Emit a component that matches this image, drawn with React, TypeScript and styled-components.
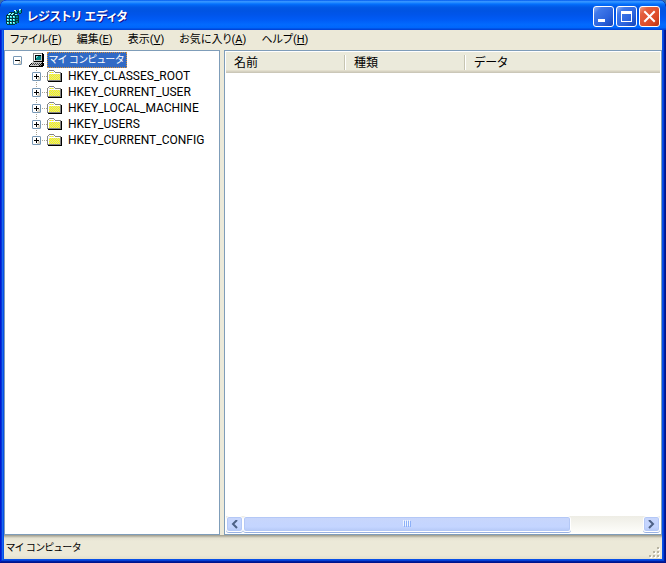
import React from 'react';
import styled, { createGlobalStyle, css } from 'styled-components';

const Global = createGlobalStyle`
  *, *::before, *::after { box-sizing: border-box; }
  html, body, #root { height: 100%; margin: 0; }
  body {
    background: #3a6ea5;
    color: #000;
    font: 12px/16px Roboto, "Noto Sans CJK JP", sans-serif;
    font-feature-settings: "palt";
    overflow: hidden;
  }
  button { font: inherit; font-feature-settings: inherit; color: inherit; padding: 0; border: 0; background: none; }
`;

const Window = styled.main`
  display: flex;
  flex-direction: column;
  height: 100%;
  padding: 0 4px 4px;
  border-radius: 7px 7px 0 0;
  overflow: hidden;
  background: #0850e8;
  box-shadow: inset -1px -1px #00138c, inset 1px 0 #0019cf, inset -2px -2px #001ea0, inset 2px 0 #0831d9, inset -3px -3px #0441d8, inset 3px 0 #166aee;
`;

const TitleBar = styled.header`
  display: flex;
  align-items: center;
  flex: none;
  gap: 5px;
  height: 30px;
  margin: 0 -4px;
  padding: 3px 6px 0 6px;
  border-radius: 7px 7px 0 0;
  background: linear-gradient(#0058ee 0, #3593ff 5%, #288eff 8%, #127dff 11%, #036ffc 14%, #0262ee 19%, #0057e5 26%, #0054e3 36%, #0055eb 50%, #005bf5 65%, #026afe 82%, #0066fc 92%, #0050e0 96%, #003dd7 100%);
`;

const Title = styled.h1`
  flex: 1;
  margin: 0;
  color: #fff;
  font-size: 12px;
  font-weight: 700;
  line-height: 20px;
  text-shadow: 1px 1px #0f1089;
`;

const Controls = styled.div`
  display: flex;
  gap: 2px;
`;

const ControlButton = styled.button<{ $close?: boolean }>`
  width: 21px;
  height: 21px;
  border: 1px solid #fff;
  border-radius: 3px;
  background: ${p => p.$close
    ? 'linear-gradient(135deg, #f0a088 0, #e4603f 22%, #dc4a26 70%, #b83210 100%)'
    : 'linear-gradient(135deg, #8fb0f5 0, #4079ea 22%, #2a62dc 65%, #1744b8 100%)'};
  svg { display: block; width: 19px; height: 19px; }
`;

const MenuBar = styled.nav`
  display: flex;
  flex: none;
  gap: 15px;
  height: 20px;
  padding: 0 6px;
  background: #ece9d8;
`;

const MenuButton = styled.button`
  font-size: 11px;
  line-height: 18px;
  white-space: nowrap;
`;

const Panes = styled.div`
  display: grid;
  grid-template-columns: 216px minmax(0, 1fr);
  gap: 4px;
  flex: 1;
  min-height: 0;
  background: #ece9d8;
`;

const pane = css`
  border: 1px solid #7f9db9;
  background: #fff;
  min-width: 0;
`;

const TreePane = styled.section`
  ${pane}
  padding: 1px 0 0 8px;
`;

const TreeList = styled.ul<{ $nested?: boolean }>`
  margin: 0;
  padding: 0 0 0 ${p => (p.$nested ? 19 : 0)}px;
  list-style: none;
`;

const TreeRow = styled.div<{ $branch?: 'middle' | 'last' }>`
  display: flex;
  align-items: center;
  height: 16px;
  ${p => p.$branch && css`
    background: repeating-linear-gradient(#aca899 0 1px, #fff 1px 2px) 4px 0 / 1px ${p.$branch === 'last' ? '8px' : '16px'} no-repeat;
  `}
`;

const Toggle = styled.button`
  width: 9px;
  height: 9px;
  svg { display: block; }
`;

const Connector = styled.span<{ $visible?: boolean }>`
  width: ${p => (p.$visible ? 6 : 7)}px;
  height: 1px;
  background: ${p => (p.$visible ? 'repeating-linear-gradient(90deg, #fff 0 1px, #aca899 1px 2px)' : 'none')};
`;

const NodeIcon = styled.span`
  width: 16px;
  height: 16px;
  margin-right: 2px;
  svg { display: block; }
`;

const NodeLabel = styled.span<{ $selected?: boolean }>`
  height: 16px;
  padding: 0 3px;
  line-height: 16px;
  white-space: nowrap;
  ${p => p.$selected && css`
    padding: 0 2px 0 1px;
    font-size: 10px;
    line-height: 14px;
    border: 1px dotted #d6913a;
    background: #316ac5;
    color: #fff;
  `}
`;

const ListPane = styled.section`
  ${pane}
  display: flex;
  flex-direction: column;
  padding: 1px;
`;

const ValueTable = styled.table`
  width: 100%;
  table-layout: fixed;
  border-collapse: separate;
  border-spacing: 0;
`;

const ColumnHead = styled.th<{ $fixed?: boolean }>`
  width: ${p => (p.$fixed ? '120px' : 'auto')};
  height: 21px;
  padding: 0 8px;
  font-weight: 400;
  line-height: 18px;
  text-align: left;
  background:
    ${p => (p.$fixed ? 'linear-gradient(#c7c5b2, #c7c5b2) calc(100% - 1px) 3px / 1px 15px no-repeat, linear-gradient(#fff, #fff) 100% 3px / 1px 15px no-repeat,' : '')}
    linear-gradient(#ebeadb 0, #ebeadb 18px, #e2decd 18px, #e2decd 19px, #d6d2c2 19px, #d6d2c2 20px, #cbc7b8 20px);
`;

const Spacer = styled.div`
  flex: 1;
`;

const ScrollBar = styled.div`
  display: flex;
  height: 17px;
  background: linear-gradient(#eeede5, #fefefb);
`;

const scrollPart = css`
  border: 1px solid #fff;
  border-radius: 3px;
  background: linear-gradient(#c8d6fb 0, #c4d5ff 70%, #b4c8f6 100%);
  box-shadow: inset 0 0 0 1px #b4c8f6, 0 1px #98b1e4;
`;

const ScrollButton = styled.button`
  ${scrollPart}
  flex: none;
  width: 17px;
  height: 16px;
  svg { display: block; margin: auto; }
`;

const ScrollTrack = styled.div`
  flex: 1;
`;

const ScrollThumb = styled.div`
  ${scrollPart}
  display: flex;
  align-items: center;
  justify-content: center;
  width: 82%;
  height: 16px;
`;

const StatusBar = styled.footer`
  display: flex;
  justify-content: space-between;
  align-items: flex-end;
  flex: none;
  height: 24px;
  padding-left: 2px;
  background: linear-gradient(#9d9a8c 0, #c9c6b5 2px, #e3e0d0 3px, #ece9d8 6px, #ece9d8 20px, #e3dfcc 100%);
`;

const StatusText = styled.span`
  font-size: 10px;
  line-height: 22px;
`;

const FolderIcon = () => (
  <svg width="16" height="16" shapeRendering="crispEdges" aria-hidden="true">
    <defs>
      <pattern id="folder-dither" width="2" height="2" patternUnits="userSpaceOnUse">
        <path d="M0 0h2v2H0z" fill="#ffff00" />
        <path d="M0 0h1v1H0zM1 1h1v1H1z" fill="#d8d8a8" />
      </pattern>
    </defs>
    <path d="M2 2h5v1h1v1h6v9H0V4h1V3h1z" fill="#848484" />
    <path d="M2 3h5v1H2zM1 4h7v1H1zM1 5h12v1H1zM1 6h1v6H1z" fill="#fff" />
    <path d="M2 4h5v1H2zM2 6h11v6H2z" fill="url(#folder-dither)" />
    <path d="M14 5h1v9H1v-1h13z" fill="#000" />
  </svg>
);

const ComputerIcon = () => (
  <svg width="16" height="16" shapeRendering="crispEdges" aria-hidden="true">
    <path d="M5 1h9v1h1v8h-1v1H4V2h1z" fill="#000" />
    <path d="M4 1h9v1H5v8H4z" fill="#848484" />
    <path d="M5 2h8v7H5z" fill="#c6c6c6" />
    <path d="M5 2h8v1H6v6H5z" fill="#fff" />
    <path d="M6 3h6v5H6z" fill="#000" />
    <path d="M7 4h5v4H7z" fill="#008484" />
    <path d="M7 4h2v1H8v1H7z" fill="#84e0e0" />
    <path d="M3 10h11v1h1v3h-1v1H0v-2h1v-1h1v-1h1z" fill="#000" />
    <path d="M3 10h10v1h-1v1h-1v1h-1v1H1v-1h1v-1h1z" fill="#c6c6c6" />
    <path d="M4 11h1v1H4zM6 11h1v1H6zM8 11h1v1H8zM10 11h1v1h-1zM3 12h1v1H3zM5 12h1v1H5zM7 12h1v1H7zM9 12h1v1H9z" fill="#424242" />
    <path d="M12 12h1v1h-1zM11 13h1v1h-1z" fill="#848484" />
  </svg>
);

const RegistryIcon = () => (
  <svg width="16" height="16" shapeRendering="crispEdges" aria-hidden="true">
    <path d="M3 3h5v1h3v2h2v8h-2v1H9v1H1v-1H0V6h1V5h2z" fill="#003a42" />
    <path d="M3 4h2v1H3zM6 4h2v1H6zM2 5h2v1H2zM5 5h2v1H5zM9 5h2v1H9z" fill="#84ffff" />
    <path d="M1 7h2v2H1zM4 7h2v2H4zM7 7h2v2H7zM1 10h2v2H1zM4 10h2v2H4zM7 10h2v2H7zM1 13h2v2H1zM4 13h2v2H4zM7 13h2v2H7z" fill="#30e0e0" />
    <path d="M1 7h1v1H1zM4 7h1v1H4zM7 7h1v1H7zM1 10h1v1H1zM4 10h1v1H4zM7 10h1v1H7zM1 13h1v1H1zM4 13h1v1H4zM7 13h1v1H7z" fill="#e0ffff" />
    <path d="M10 7h2v2h-2zM10 10h2v1h-2zM10 12h2v2h-2z" fill="#008484" />
    <path d="M8 1h3v1h1v3H9V4H8zM13 0h3v4h-1v1h-2V4h-1V1h1z" fill="#003a42" />
    <path d="M8 1h2v1H8zM13 0h2v1h-2z" fill="#c0ffff" />
    <path d="M9 2h2v2H9zM13 1h2v3h-2z" fill="#00a5a5" />
    <path d="M9 2h1v1H9zM13 1h1v1h-1z" fill="#84ffff" />
  </svg>
);

const ToggleGlyph = ({ open }: { open?: boolean }) => (
  <svg width="9" height="9" shapeRendering="crispEdges" aria-hidden="true">
    <path d="M0 0h9v9H0z" fill="#b4c5d6" />
    <path d="M1 0h7v1h1v7h-1v1H1V8H0V1h1z" fill="#7898b5" />
    <path d="M1 1h7v7H1z" fill="#fff" />
    <path d="M6 5h2v3H5V7h1z" fill="#d8d2c4" />
    <path d={open ? 'M2 4h5v1H2z' : 'M2 4h2V2h1v2h2v1H5v2H4V5H2z'} fill="#000" />
  </svg>
);

const Chevron = ({ right }: { right?: boolean }) => (
  <svg width="9" height="9" viewBox="0 0 9 9" aria-hidden="true">
    <path d={right ? 'M2 0l4 4-4 4' : 'M7 0L3 4l4 4'} fill="none" stroke="#4d6185" strokeWidth="2" />
  </svg>
);

const Grip = () => (
  <svg width="8" height="8" shapeRendering="crispEdges" aria-hidden="true">
    <path d="M0 0h1v6H0zM2 0h1v6H2zM4 0h1v6H4zM6 0h1v6H6z" fill="#eef4fe" />
    <path d="M1 1h1v6H1zM3 1h1v6H3zM5 1h1v6H5zM7 1h1v6H7z" fill="#8cb0f8" />
  </svg>
);

const SizeGrip = () => (
  <svg width="13" height="13" shapeRendering="crispEdges" aria-hidden="true">
    <path d="M9 2h2v2H9zM5 6h2v2H5zM9 6h2v2H9zM1 10h2v2H1zM5 10h2v2H5zM9 10h2v2H9z" fill="#fff" />
    <path d="M8 1h2v2H8zM4 5h2v2H4zM8 5h2v2H8zM0 9h2v2H0zM4 9h2v2H4zM8 9h2v2H8z" fill="#b8b4a2" />
  </svg>
);

const menus = [['ファイル', 'F'], ['編集', 'E'], ['表示', 'V'], ['お気に入り', 'A'], ['ヘルプ', 'H']];
const hives = ['HKEY_CLASSES_ROOT', 'HKEY_CURRENT_USER', 'HKEY_LOCAL_MACHINE', 'HKEY_USERS', 'HKEY_CURRENT_CONFIG'];

export default function App() {
  return (
    <>
      <Global />
      <Window>
        <TitleBar>
          <RegistryIcon />
          <Title>レジストリ エディタ</Title>
          <Controls>
            <ControlButton aria-label="最小化"><svg aria-hidden="true"><path d="M4 12h7v3H4z" fill="#fff" /></svg></ControlButton>
            <ControlButton aria-label="最大化"><svg shapeRendering="crispEdges" aria-hidden="true"><path d="M4 4h11v11H4zM5 7v7h9V7z" fill="#fff" fillRule="evenodd" /></svg></ControlButton>
            <ControlButton $close aria-label="閉じる"><svg aria-hidden="true"><path d="M5 5l9 9M14 5l-9 9" stroke="#fff" strokeWidth="2" strokeLinecap="square" /></svg></ControlButton>
          </Controls>
        </TitleBar>
        <MenuBar>
          {menus.map(([name, key]) => <MenuButton key={key}>{name}(<u>{key}</u>)</MenuButton>)}
        </MenuBar>
        <Panes>
          <TreePane>
            <TreeList>
              <li>
                <TreeRow>
                  <Toggle aria-label="折りたたむ"><ToggleGlyph open /></Toggle>
                  <Connector />
                  <NodeIcon><ComputerIcon /></NodeIcon>
                  <NodeLabel $selected>マイ コンピュータ</NodeLabel>
                </TreeRow>
                <TreeList $nested>
                  {hives.map((name, i) => (
                    <li key={name}>
                      <TreeRow $branch={i === hives.length - 1 ? 'last' : 'middle'}>
                        <Toggle aria-label="展開"><ToggleGlyph /></Toggle>
                        <Connector $visible />
                        <NodeIcon><FolderIcon /></NodeIcon>
                        <NodeLabel>{name}</NodeLabel>
                      </TreeRow>
                    </li>
                  ))}
                </TreeList>
              </li>
            </TreeList>
          </TreePane>
          <ListPane>
            <ValueTable>
              <thead>
                <tr><ColumnHead $fixed>名前</ColumnHead><ColumnHead $fixed>種類</ColumnHead><ColumnHead>データ</ColumnHead></tr>
              </thead>
            </ValueTable>
            <Spacer />
            <ScrollBar>
              <ScrollButton aria-label="左へ"><Chevron /></ScrollButton>
              <ScrollTrack><ScrollThumb><Grip /></ScrollThumb></ScrollTrack>
              <ScrollButton aria-label="右へ"><Chevron right /></ScrollButton>
            </ScrollBar>
          </ListPane>
        </Panes>
        <StatusBar>
          <StatusText>マイ コンピュータ</StatusText>
          <SizeGrip />
        </StatusBar>
      </Window>
    </>
  );
}
